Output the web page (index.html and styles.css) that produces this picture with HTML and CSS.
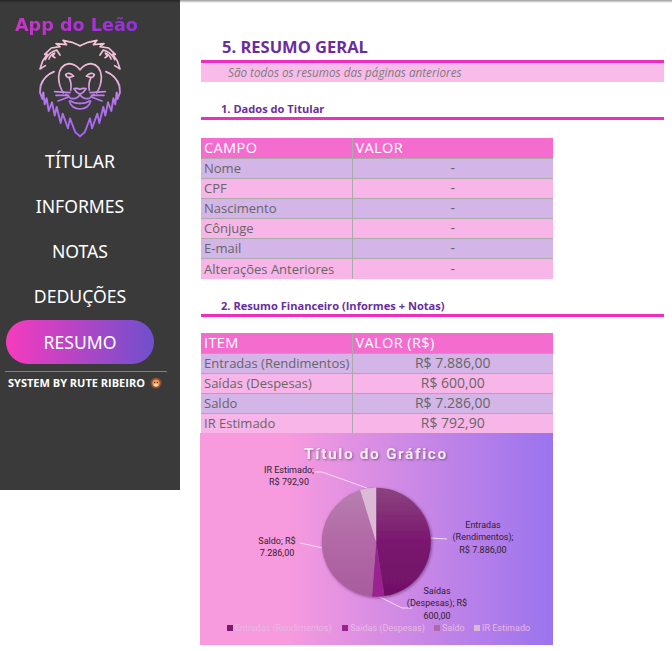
FILE: index.html
```html
<!doctype html>
<html lang="pt-BR">
<head>
    <meta charset="UTF-8">
    <meta name="viewport" content="width=device-width, initial-scale=1.0">
    <title>App do Leão</title>
    <link rel="stylesheet" href="styles.css">
</head>
<body>
    <div class="top-shadow"></div>
    <div class="page">
        <!-- menu lateral -->
        <aside class="sidebar">
            <div class="sidebar-brand">App do Leão</div>
            <svg class="sidebar-logo" viewBox="0 0 330 330" aria-hidden="true">
                <defs>
                    <linearGradient id="lion-stroke" gradientUnits="userSpaceOnUse" x1="0" y1="15" x2="0" y2="303">
                        <stop offset="0" stop-color="#f6c6d8"/>
                        <stop offset="0.4" stop-color="#ecb6dc"/>
                        <stop offset="0.6" stop-color="#b676ee"/>
                        <stop offset="1" stop-color="#a362f2"/>
                    </linearGradient>
                </defs>
                <g fill="none" stroke="url(#lion-stroke)" stroke-width="5" stroke-linejoin="round" stroke-linecap="round">
                    <g id="lion-half">
                        <!-- juba de cima -->
                        <path d="M150 32 L126 22 L99 16 L110 29 L78 26 L90 35 L64 39 L44 58 L52 58 L38 78 L30 102 L46 92"/>
                        <!-- orelha -->
                        <path d="M46 74 Q56 52 80 45 L90 60"/>
                        <path d="M57 72 Q60 60 74 54 L68 64 L75 68"/>
                        <!-- lateral e pontas de baixo -->
                        <path class="lion-mane" d="M72 110 Q42 122 32 152 L30 172 L37 192 L40 172 L44 208 L50 190 L56 228 L66 202 L74 242 L80 216 L92 264 L98 236 L114 280 L120 250 L136 292 L150 304"/>
                        <!-- rosto -->
                        <path d="M150 104 Q136 87 117 86 Q89 90 86 124 Q85 150 100 174"/>
                        <path d="M107 119 Q116 109 131 123 Q118 129 112 126 Q109 124 107 119 Z"/>
                        <path d="M118 130 Q126 146 122 166"/>
                        <!-- focinho -->
                        <path d="M150 163 Q142 158 132 161 L140 172 L150 178"/>
                        <path d="M150 178 Q142 194 122 190 L108 178"/>
                        <path d="M118 198 Q124 221 150 222"/>
                        <path d="M122 198 Q134 206 150 205"/>
                        <!-- bigodes -->
                        <path d="M74 170 L120 173"/>
                        <path d="M78 181 L116 181"/>
                        <path d="M84 198 L114 187"/>
                    </g>
                    <use href="#lion-half" transform="translate(300 0) scale(-1 1)"/>
                </g>
            </svg>
            <nav class="sidebar-nav">
                <div class="sidebar-item">TÍTULAR</div>
                <div class="sidebar-item">INFORMES</div>
                <div class="sidebar-item">NOTAS</div>
                <div class="sidebar-item">DEDUÇÕES</div>
                <div class="sidebar-item sidebar-item-active">RESUMO</div>
            </nav>
            <div class="sidebar-footer">
                SYSTEM BY RUTE RIBEIRO
                <svg class="sidebar-footer-icon" viewBox="0 0 12 12" aria-hidden="true">
                    <circle cx="6" cy="6" r="5.6" fill="#8a4a3c"/>
                    <circle cx="6" cy="6.2" r="3.6" fill="#f0a040"/>
                    <ellipse cx="6" cy="8" rx="2" ry="1.6" fill="#f6d8c8"/>
                    <circle cx="4.6" cy="5.4" r="0.6" fill="#3a2020"/>
                    <circle cx="7.4" cy="5.4" r="0.6" fill="#3a2020"/>
                </svg>
            </div>
        </aside>

        <!-- conteudo -->
        <main class="content">
            <h1 class="content-title">5. RESUMO GERAL</h1>
            <div class="content-subtitle">São todos os resumos das páginas anteriores</div>

            <h2 class="section-title section-title-first">1. Dados do Titular</h2>
            <table class="data-table data-table-tall">
                <tr><th>CAMPO</th><th>VALOR</th></tr>
                <tr><td>Nome</td><td>-</td></tr>
                <tr><td>CPF</td><td>-</td></tr>
                <tr><td>Nascimento</td><td>-</td></tr>
                <tr><td>Cônjuge</td><td>-</td></tr>
                <tr><td>E-mail</td><td>-</td></tr>
                <tr><td>Alterações Anteriores</td><td>-</td></tr>
            </table>

            <h2 class="section-title">2. Resumo Financeiro (Informes + Notas)</h2>
            <table class="data-table">
                <tr><th>ITEM</th><th>VALOR (R$)</th></tr>
                <tr><td>Entradas (Rendimentos)</td><td>R$ 7.886,00</td></tr>
                <tr><td>Saídas (Despesas)</td><td>R$ 600,00</td></tr>
                <tr><td>Saldo</td><td>R$ 7.286,00</td></tr>
                <tr><td>IR Estimado</td><td>R$ 792,90</td></tr>
            </table>

            <!-- grafico -->
            <svg class="chart" viewBox="0 0 353 212">
                <defs>
                    <linearGradient id="pie-a" gradientUnits="userSpaceOnUse" x1="0" y1="55" x2="0" y2="164">
                        <stop offset="0" stop-color="#8c437f"/>
                        <stop offset="0.5" stop-color="#7a166f"/>
                        <stop offset="1" stop-color="#701066"/>
                    </linearGradient>
                    <linearGradient id="pie-b" gradientUnits="userSpaceOnUse" x1="0" y1="55" x2="0" y2="164">
                        <stop offset="0" stop-color="#b680b0"/>
                        <stop offset="0.5" stop-color="#b268a6"/>
                        <stop offset="1" stop-color="#a85c9e"/>
                    </linearGradient>
                    <filter id="pie-shadow" x="-20%" y="-20%" width="140%" height="140%">
                        <feDropShadow dx="1" dy="1" stdDeviation="1.6" flood-color="#40103c" flood-opacity="0.55"/>
                    </filter>
                </defs>
                <text class="chart-title" x="176" y="26" text-anchor="middle">Título do Gráfico</text>

                <g class="chart-leaders">
                    <path d="M115 39 L122 39 L167 55"/>
                    <path d="M100 110 L123 115"/>
                    <path d="M230 105 L247 106"/>
                    <path d="M178 163 L202 175 L212 175"/>
                </g>

                <g filter="url(#pie-shadow)">
                    <path fill="url(#pie-a)" d="M176.2 109.2 L176.2 54.7 A54.5 54.5 0 0 1 184.4 163.1 Z"/>
                    <path fill="#9a2191" d="M176.2 109.2 L184.4 163.1 A54.5 54.5 0 0 1 172 163.5 Z"/>
                    <path fill="url(#pie-b)" d="M176.2 109.2 L172 163.5 A54.5 54.5 0 0 1 160.1 57.1 Z"/>
                    <path fill="#dcb9d4" d="M176.2 109.2 L160.1 57.1 A54.5 54.5 0 0 1 176.2 54.7 Z"/>
                </g>

                <g class="chart-label" text-anchor="middle">
                    <text x="89" y="40">IR Estimado;</text>
                    <text x="89" y="52">R$ 792,90</text>
                    <text x="77" y="111">Saldo; R$</text>
                    <text x="77" y="123">7.286,00</text>
                    <text x="283" y="95">Entradas</text>
                    <text x="283" y="107">(Rendimentos);</text>
                    <text x="283" y="120">R$ 7.886,00</text>
                    <text x="237" y="161">Saídas</text>
                    <text x="237" y="173">(Despesas); R$</text>
                    <text x="237" y="186">600,00</text>
                </g>

                <g class="chart-legend">
                    <rect x="27" y="192" width="6" height="6" fill="#7a1a70"/>
                    <text x="35" y="198">Entradas (Rendimentos)</text>
                    <rect x="142" y="192" width="6" height="6" fill="#9a2191"/>
                    <text x="150" y="198">Saídas (Despesas)</text>
                    <rect x="234" y="192" width="6" height="6" fill="#b268a6"/>
                    <text x="242" y="198">Saldo</text>
                    <rect x="274" y="192" width="6" height="6" fill="#dcb9d4"/>
                    <text x="282" y="198">IR Estimado</text>
                </g>
            </svg>
        </main>
    </div>
</body>
</html>
```

FILE: styles.css
```css
* {
    box-sizing: border-box;
}

html,
body {
    margin: 0;
    padding: 0;
    background-color: #fff;
}

.top-shadow {
    position: absolute;
    top: 0;
    left: 0;
    width: 100%;
    height: 3px;
    background: linear-gradient(to bottom, rgba(0, 0, 0, 0.4), rgba(0, 0, 0, 0));
}

.page {
    display: flex;
    align-items: flex-start;
}

.sidebar {
    flex: 0 0 180px;
    height: 490px;
    padding-top: 14px;
    background-color: #3a3a3a;
}

.sidebar-brand {
    width: 140px;
    margin-left: 15px;
    font-family: "DejaVu Sans", sans-serif;
    font-size: 17.6px;
    font-weight: 700;
    line-height: 22px;
    white-space: nowrap;
    background: linear-gradient(to right, #cb36c6, #8a2ee4);
    background-clip: text;
    -webkit-background-clip: text;
    color: transparent;
}

.sidebar-logo {
    display: block;
    width: 110px;
    height: 110px;
    margin: -1px 0 0 30px;
}

.lion-mane {
    stroke-width: 5.6;
}

.sidebar-nav {
    display: flex;
    flex-direction: column;
    align-items: center;
    width: 160px;
    margin-top: -6px;
}

.sidebar-item {
    width: 148px;
    height: 45px;
    font-family: "Noto Sans", sans-serif;
    font-size: 17.6px;
    line-height: 45px;
    text-align: center;
    color: #fff;
}

.sidebar-item-active {
    height: 44px;
    margin-top: 1px;
    line-height: 44px;
    border-radius: 22px;
    background: linear-gradient(to right, #f63bbf, #6f50cc);
}

.sidebar-footer {
    display: flex;
    align-items: center;
    gap: 5px;
    width: 162px;
    height: 22px;
    margin: 7px 0 0 5px;
    padding-left: 3px;
    border-top: 1px solid #d84aa8;
    font-family: "Open Sans", sans-serif;
    font-size: 11px;
    font-weight: 700;
    white-space: nowrap;
    color: #fff;
}

.sidebar-footer-icon {
    flex: none;
    width: 12px;
    height: 12px;
}

.content {
    flex: 1;
    padding: 37px 8px 0 21px;
}

.content-title {
    margin: 0;
    padding-left: 21px;
    height: 23px;
    font-family: "Open Sans", sans-serif;
    font-size: 16.5px;
    font-weight: 700;
    line-height: 20px;
    color: #6a2da0;
}

.content-subtitle {
    height: 22px;
    padding-left: 27px;
    border-top: 3px solid #ee2fbd;
    background-color: #f9bbea;
    font-family: "Open Sans", sans-serif;
    font-size: 11.7px;
    font-style: italic;
    line-height: 19px;
    color: #7d7d7d;
}

.section-title {
    height: 35px;
    margin: 19px 0 0;
    padding: 0 0 0 20px;
    font-family: "Open Sans", sans-serif;
    font-size: 11.1px;
    font-weight: 700;
    line-height: 16px;
    color: #6a2da0;
    background: linear-gradient(#ee2fbd, #ee2fbd) no-repeat 0 16px / 100% 3px;
}

.section-title-first {
    height: 37px;
}

.data-table {
    width: 352px;
    border-collapse: collapse;
    table-layout: fixed;
    font-family: "Open Sans", sans-serif;
    font-size: 13px;
}

.data-table th,
.data-table td {
    height: 20px;
    padding: 0 3px;
    border-top: 1px solid #aaa;
    line-height: 18px;
    color: #666;
    overflow: hidden;
    white-space: nowrap;
}

.data-table th:first-child,
.data-table td:first-child {
    width: 151px;
    border-right: 1px solid #aaa;
}

.data-table th {
    border-top: 0;
    background-color: #f56ccf;
    font-size: 14.5px;
    font-weight: 400;
    letter-spacing: 0.4px;
    text-align: left;
    color: #fff;
}

.data-table td {
    text-align: left;
}

.data-table td + td {
    font-size: 14px;
    text-align: center;
}

.data-table tr:nth-child(even) td {
    background-color: #d3b5e8;
}

.data-table tr:nth-child(odd) td {
    background-color: #f8b6e8;
}

.data-table-tall tr:last-child td {
    height: 21px;
}

.chart {
    display: block;
    width: 353px;
    height: 212px;
    margin-left: -1px;
    background: linear-gradient(to right, #f99ade 0%, #f79ade 25%, #9a74ee 100%);
}

.chart-title {
    font-family: "Roboto", sans-serif;
    font-size: 15.5px;
    font-weight: 700;
    letter-spacing: 1.6px;
    fill: #f7ecf4;
    filter: drop-shadow(1px 1px 1px rgba(90, 40, 90, 0.6));
}

.chart-leaders path {
    fill: none;
    stroke: #f6dcf0;
    stroke-width: 1;
}

.chart-label text {
    font-family: "Roboto", sans-serif;
    font-size: 9px;
    fill: #33202f;
}

.chart-legend text {
    font-family: "Roboto", sans-serif;
    font-size: 9px;
    fill: #e8b8e4;
}
```
